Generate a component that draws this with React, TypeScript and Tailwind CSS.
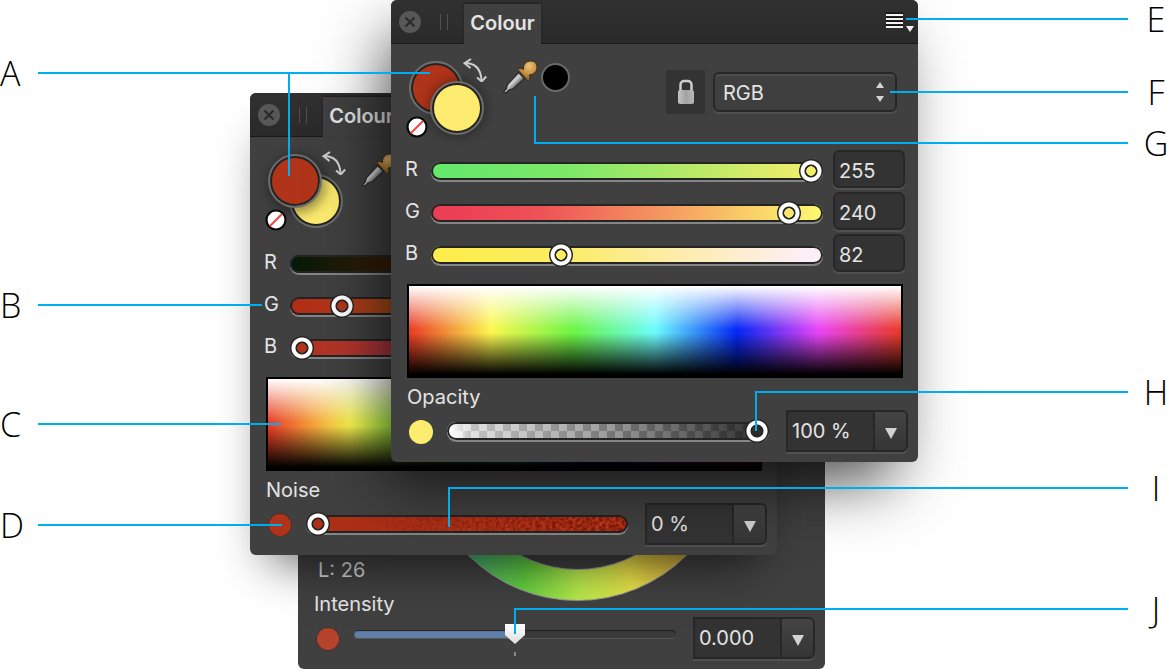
import { useId, useState } from "react";
import type { ReactNode } from "react";
import clsx from "clsx";

type Channel = { label: string; value: number; track: string };

const yellowChannels: Channel[] = [
    { label: "R", value: 255, track: "bg-[linear-gradient(90deg,#66e86a_5%,#7de868_35%,#b5e968_65%,#f8ee6a)]" },
    { label: "G", value: 240, track: "bg-[linear-gradient(90deg,#ec3e56_5%,#ee5257_28%,#f49a5f_60%,#f9d468_83%,#fcfa71)]" },
    { label: "B", value: 82, track: "bg-[linear-gradient(90deg,#fdee4c_5%,#fcec62_33%,#fdec98_55%,#fdeff8_96%)]" },
];

const redChannels: Channel[] = [
    { label: "R", value: 176, track: "bg-[linear-gradient(90deg,#031a06,#2c1c07_20%,#5c250c_45%,#e8401f)]" },
    { label: "G", value: 28, track: "bg-[linear-gradient(90deg,#b22c17,#b03a17_16%,#9f5f1c_35%,#a8ef3d)]" },
    { label: "B", value: 0, track: "bg-[linear-gradient(90deg,#b03418,#b4352b_15%,#a33550_35%,#a438f0)]" },
];

type Callout = { label: string; side: "left" | "right"; y: number; points: string[] };

const callouts: Callout[] = [
    { label: "A", side: "left", y: 73, points: ["38,73 430,73", "289,73 289,176"] },
    { label: "B", side: "left", y: 305, points: ["38,305 262,305"] },
    { label: "C", side: "left", y: 424, points: ["38,424 281,424"] },
    { label: "D", side: "left", y: 525, points: ["38,525 282,525"] },
    { label: "E", side: "right", y: 19, points: ["906,19 1128,19"] },
    { label: "F", side: "right", y: 92, points: ["890,92 1128,92"] },
    { label: "G", side: "right", y: 143, points: ["535,96 535,143 1128,143"] },
    { label: "H", side: "right", y: 392, points: ["756,431 756,392 1128,392"] },
    { label: "I", side: "right", y: 488, points: ["449,527 449,488 1128,488"] },
    { label: "J", side: "right", y: 609, points: ["515,634 515,609 1128,609"] },
];

const RING_THUMB =
    "[&::-webkit-slider-thumb]:size-6 [&::-webkit-slider-thumb]:appearance-none [&::-webkit-slider-thumb]:rounded-full [&::-webkit-slider-thumb]:bg-[radial-gradient(circle,transparent_4.5px,#262626_5px,#262626_6px,#fff_7px,#fff_10px,#262626_11px)]";

const TRACK = "h-[18px] appearance-none rounded-full shadow-[inset_0_0_0_2px_#242424,0_2px_0_#858585]";

const CloseIcon = () => (
    <svg viewBox="0 0 22 22" className="size-[22px]">
        <circle cx="11" cy="11" r="11" fill="#575757" />
        <path d="M6.5 6.5l9 9M15.5 6.5l-9 9" stroke="#2b2b2b" strokeWidth="2.2" />
    </svg>
);

const MenuIcon = () => (
    <svg viewBox="0 0 28 20" className="h-5 w-7">
        <path d="M0 1.5h17M0 5.5h17M0 9.5h17M0 13.5h17" stroke="#111" strokeWidth="2" />
        <path d="M0 3h17M0 7h17M0 11h17M0 15h17" stroke="#f2f2f2" strokeWidth="2" />
        <path d="M20 14h8l-4 6z" fill="#f2f2f2" />
    </svg>
);

const SwapIcon = () => (
    <svg viewBox="0 0 24 24" fill="none" stroke="#cfcfcf" strokeWidth="2" className="size-6">
        <path d="M1.5 5C12 5 18 11 18.5 22.5" />
        <path d="M8 1L1.5 5.2 7.5 10M14 19.5l4.7 4 4.5-5" />
    </svg>
);

const DropperIcon = () => (
    <svg viewBox="0 0 36 34" className="h-[34px] w-9">
        <defs>
            <linearGradient id="glass" gradientUnits="userSpaceOnUse" x1="8" y1="18" x2="15" y2="25">
                <stop offset="0" stopColor="#777" />
                <stop offset="0.5" stopColor="#d4d4d4" />
                <stop offset="1" stopColor="#6f6f6f" />
            </linearGradient>
            <radialGradient id="bulb" cx="0.6" cy="0.25" r="0.7">
                <stop offset="0" stopColor="#ecc37c" />
                <stop offset="0.6" stopColor="#c48d3c" />
                <stop offset="1" stopColor="#8d5f22" />
            </radialGradient>
        </defs>
        <path
            d="M16.500 12.500L22.500 18.500 11.500 28.500 7 30 4 33 1.500 32 4.500 28.500 5.500 24.500z"
            fill="url(#glass)"
            stroke="#2a2a2a"
            strokeWidth="1.200"
        />
        <path
            d="M15.500 9.500c1.800-1.600 4-1.600 6 0C21 4.500 24.300 1 28.700 1c3.900 0 6.300 2.700 6.300 6.300 0 4.300-3.300 7.400-7.800 7.700 1.200 2.200 1 4.500-.9 6.200z"
            fill="url(#bulb)"
            stroke="#3a2d1a"
            strokeWidth="1"
        />
    </svg>
);

const LockIcon = () => (
    <svg viewBox="0 0 18 26" className="h-[26px] w-[18px]">
        <defs>
            <linearGradient id="lock-body">
                <stop offset="0" stopColor="#c4c4c4" />
                <stop offset="0.5" stopColor="#a2a2a2" />
                <stop offset="1" stopColor="#b8b8b8" />
            </linearGradient>
        </defs>
        <path d="M3.500 12V5.500a3.500 3.500 0 0 1 3.500-3.500h4a3.500 3.500 0 0 1 3.500 3.500V12" fill="none" stroke="#cdcdcd" strokeWidth="2.500" />
        <rect x="1" y="11" width="16" height="14" rx="2" fill="url(#lock-body)" />
    </svg>
);

type PanelProps = { className: string; label: string; children: ReactNode };

const Panel = ({ className, label, children }: PanelProps) => (
    <section
        aria-label={label}
        className={clsx("absolute isolate flex min-h-[462px] w-[527px] flex-col rounded-md bg-[#404040] text-xl text-[#e4e4e4]", className)}
    >
        <header className="flex h-11 items-center rounded-t-md border-b border-[#191919] bg-linear-to-b from-[#313131] to-[#2a2a2a] pr-1 pl-2">
            <button aria-label="Close panel"><CloseIcon /></button>
            <span className="ml-[19px] h-4 w-2 border-x border-[#505050]" />
            <h2 className="-mb-px ml-4 flex h-10 w-[77px] items-center justify-center self-end bg-[#404040] pb-0.5 font-semibold shadow-[0_-1px_2px_#1c1c1c]">
                Colour
            </h2>
            <button aria-label="Panel preferences" className="ml-auto"><MenuIcon /></button>
        </header>
        {children}
    </section>
);

const Swatches = ({ front }: { front: "fill" | "stroke" }) => {
    const ring = "absolute size-[50px] rounded-full border-2 border-[#242424] outline-2 outline-[#6d6d6d]";

    return (
        <div className="relative h-[86px] w-[84px]">
            <button
                aria-label="Stroke colour"
                className={clsx(ring, "top-[7px] left-[6px] bg-[#b03419]", front === "stroke" && "z-10 shadow-[2px_3px_12px_4px_#0006]")}
            />
            <button
                aria-label="Fill colour"
                className={clsx(ring, "top-[27px] left-[27px] bg-[#fdec6f]", front === "fill" && "z-10 shadow-[0_0_12px_4px_#0005]")}
            />
            <button aria-label="No colour" className="absolute top-[60px] left-px z-20">
                <svg viewBox="0 0 22 22" className="size-[22px]">
                    <circle cx="11" cy="11" r="9.500" fill="#fff" stroke="#0a0a0a" strokeWidth="2.200" />
                    <path d="M5 17L17 5" stroke="#f0463c" strokeWidth="2" />
                </svg>
            </button>
            <button aria-label="Swap colours" className="absolute top-0.5 left-[58px]"><SwapIcon /></button>
        </div>
    );
};

const ChannelRow = ({ label, value, track }: Channel) => {
    const [current, setCurrent] = useState(value);
    const id = useId();

    return (
        <div className="flex h-[42px] items-center">
            <label htmlFor={id} className="w-[26px]">{label}</label>
            <input
                id={id}
                type="range"
                min={0}
                max={255}
                value={current}
                onChange={(e) => setCurrent(Number(e.target.value))}
                className={clsx("mt-1 min-w-0 flex-1", TRACK, RING_THUMB, track)}
            />
            <input
                aria-label={`${label} value`}
                value={current}
                onChange={(e) => setCurrent(Number(e.target.value) || 0)}
                className="ml-[10px] h-[38px] w-[72px] rounded-md border-2 border-[#272727] bg-[#333] px-1 pt-1 shadow-[0_2px_0_#505050]"
            />
        </div>
    );
};

const Spectrum = () => (
    <div
        role="img"
        aria-label="Colour spectrum"
        className="mr-[15px] ml-4 mt-[10px] h-[94px] border-2 border-black bg-[linear-gradient(#fff,#fff0_48%,#0000_52%,#000_98%),linear-gradient(90deg,#e93a25,#fcf750_16.700%,#6cf545_33.300%,#6cfcfd_50%,#0427f5_66.700%,#ea45f6_83.300%,#e93a25)]"
    />
);

type FooterProps = { label: string; dot: string; value: string; children: (id: string) => ReactNode };

const Footer = ({ label, dot, value, children }: FooterProps) => {
    const id = useId();

    return (
        <div className="relative pb-[10px]">
            <label htmlFor={id} className="block px-4 pt-px leading-6">{label}</label>
            <div className="mt-px flex h-[42px] items-center pr-[10px] pl-[18px]">
                <button aria-label={`${label} colour`} className={clsx("mt-0.5 size-6 rounded-full", dot)} />
                <div className="relative mr-[17px] ml-[14px] flex flex-1 items-center">{children(id)}</div>
                <div className="flex h-[42px] w-[122px] rounded-r-md border-2 border-[#272727] bg-[#333] shadow-[0_2px_0_#505050]">
                    <input aria-label={`${label} value`} defaultValue={value} className="min-w-0 flex-1 px-1" />
                    <button
                        aria-label={`${label} options`}
                        className="flex w-[33px] items-center justify-center rounded-r border-l-2 border-[#272727] bg-linear-to-b from-[#444] to-[#353535] pt-1"
                    >
                        <svg viewBox="0 0 12 11" className="h-[11px] w-3"><path d="M0 0h12L6 11z" fill="#d2d2d2" /></svg>
                    </button>
                </div>
            </div>
        </div>
    );
};

type SlidersProps = { front: "fill" | "stroke"; channels: Channel[]; children: ReactNode };

const SlidersBody = ({ front, channels, children }: SlidersProps) => (
    <>
        <div className="flex h-[104px] items-start pt-3 pr-[21px] pl-[14px]">
            <Swatches front={front} />
            <div className="mt-1 ml-[13px] flex items-center">
                <button aria-label="Colour picker"><DropperIcon /></button>
                <button aria-label="Picked colour" className="ml-[3px] size-[29px] rounded-full border-2 border-[#696969] bg-black" />
            </div>
            <div className="mt-[14px] ml-auto flex items-center gap-2">
                <button aria-label="Lock colour model" className="flex h-11 w-[39px] items-center justify-center bg-[#333]">
                    <LockIcon />
                </button>
                <div className="relative">
                    <select
                        aria-label="Colour model"
                        className="block h-10 w-[184px] appearance-none rounded-md border-2 border-[#272727] bg-[#3f3f3f] px-2 pt-0.5 shadow-[0_2px_0_#505050,inset_0_2px_0_#4c4c4c]"
                    >
                        <option>RGB</option>
                        <option>HSL</option>
                        <option>CMYK</option>
                    </select>
                    <svg viewBox="0 0 8 20" className="pointer-events-none absolute top-[10px] right-[13px] h-5 w-2">
                        <path d="M0 6h8L4 0zM0 14h8l-4 6z" fill="#d2d2d2" />
                    </svg>
                </div>
            </div>
        </div>
        <div className="pr-[13px] pl-[14px]">
            {channels.map((channel) => <ChannelRow key={channel.label} {...channel} />)}
        </div>
        <Spectrum />
        <div className="mt-[6px]">{children}</div>
    </>
);

// Grain gets stronger towards the right end of the track
const NoiseTrack = () => (
    <svg className="absolute inset-0 h-full w-full rounded-full">
        <defs>
            <filter id="grain" x="0" y="0" width="100%" height="100%" colorInterpolationFilters="sRGB">
                <feTurbulence type="fractalNoise" baseFrequency="0.3" numOctaves="2" seed="4" />
                <feColorMatrix values="0.6 0 0 0 0.33  0.3 0 0 0 0.01  0.2 0 0 0 -0.03  0 0 0 0 1" />
            </filter>
            <linearGradient id="grain-fade">
                <stop offset="0.15" stopColor="#fff" stopOpacity="0" />
                <stop offset="0.85" stopColor="#fff" />
            </linearGradient>
            <mask id="grain-mask"><rect width="100%" height="100%" fill="url(#grain-fade)" /></mask>
        </defs>
        <rect width="100%" height="100%" fill="#ac3016" />
        <g mask="url(#grain-mask)"><rect width="100%" height="100%" filter="url(#grain)" /></g>
    </svg>
);

const ColourWheelPanel = () => (
    <Panel label="Colour wheel" className="top-[207px] left-[298px]">
        <div className="relative flex flex-1 flex-col justify-end">
            <div className="absolute bottom-[-10px] left-[125px] size-[309px] rounded-full border border-[#999] bg-[conic-gradient(#a03cf0,#e8432c_90deg,#cba23c_135deg,#eae24a_158deg,#b6e94b_180deg,#62cc3e_202deg,#4bb070_222deg,#3ac8e0_270deg,#a03cf0)] p-[30px]">
                <div className="h-full rounded-full border border-[#999] bg-[#404040]" />
            </div>
            <p className="relative mb-[9px] px-5 leading-6 text-[#d0d0d0]">L: 26</p>
        </div>
        <Footer label="Intensity" dot="bg-[#b5432c] ring-1 ring-[#333] ring-inset" value="0.000">
            {(id) => (
                <>
                    <span className="absolute top-full left-1/2 mt-1.5 h-1 w-0.5 -translate-x-1/2 bg-[#888]" />
                    <input
                        id={id}
                        type="range"
                        min={-1}
                        max={1}
                        step={0.001}
                        defaultValue={0}
                        className="relative mb-2 h-2 min-w-0 flex-1 appearance-none rounded-full bg-[linear-gradient(90deg,#5f7fa8_50%,#3a3a3a_50%)] shadow-[inset_0_1px_1px_#1d1d1d,0_1px_0_#555] [&::-webkit-slider-thumb]:h-5 [&::-webkit-slider-thumb]:w-5 [&::-webkit-slider-thumb]:appearance-none [&::-webkit-slider-thumb]:bg-linear-to-b [&::-webkit-slider-thumb]:from-white [&::-webkit-slider-thumb]:to-[#ddd] [&::-webkit-slider-thumb]:[clip-path:polygon(0_0,100%_0,100%_55%,50%_100%,0_55%)]"
                    />
                </>
            )}
        </Footer>
    </Panel>
);

const Callouts = () => (
    <>
        <svg className="pointer-events-none absolute inset-0 h-full w-full" fill="none" stroke="#00aeef" strokeWidth="2">
            {callouts.flatMap(({ points }) => points.map((line) => <polyline key={line} points={line} />))}
        </svg>
        {callouts.map(({ label, side, y }) => (
            <span
                key={label}
                style={{ top: y }}
                className={clsx(
                    "absolute -translate-y-1/2 font-['Open_Sans',sans-serif] text-[34px] leading-9 font-light text-black",
                    side === "left" ? "left-0" : "left-[1142px] w-[28px] text-center"
                )}
            >
                {label}
            </span>
        ))}
    </>
);

const App = () => (
    <main className="relative min-h-[670px] w-full overflow-hidden bg-white font-['Inter',sans-serif]">
        <ColourWheelPanel />

        <Panel label="Stroke colour" className="top-[93px] left-[250px] shadow-[0_26px_46px_-20px_#000a]">
            <SlidersBody front="stroke" channels={redChannels}>
                <Footer label="Noise" dot="bg-[#b03419] ring-1 ring-[#333] ring-inset" value="0 %">
                    {(id) => (
                        <>
                            <NoiseTrack />
                            <input id={id} type="range" defaultValue={0} className={clsx("relative min-w-0 flex-1", TRACK, RING_THUMB)} />
                        </>
                    )}
                </Footer>
            </SlidersBody>
        </Panel>

        <Panel label="Fill colour" className="top-0 left-[391px] shadow-[-14px_28px_60px_-10px_#000b]">
            <SlidersBody front="fill" channels={yellowChannels}>
                <Footer label="Opacity" dot="bg-[#fdec6f]" value="100 %">
                    {(id) => (
                        <input
                            id={id}
                            type="range"
                            defaultValue={100}
                            className={clsx(
                                "min-w-0 flex-1 bg-[linear-gradient(90deg,#fff_1%,#fff9_7%,#8888_50%,#1c1c1ce0_98%),conic-gradient(#666_25%,#b4b4b4_25%_50%,#666_50%_75%,#b4b4b4_75%)] bg-size-[100%_100%,16px_16px] bg-position-[0_0,0_1px]",
                                TRACK,
                                RING_THUMB
                            )}
                        />
                    )}
                </Footer>
            </SlidersBody>
        </Panel>

        <Callouts />
    </main>
);

export default App;
